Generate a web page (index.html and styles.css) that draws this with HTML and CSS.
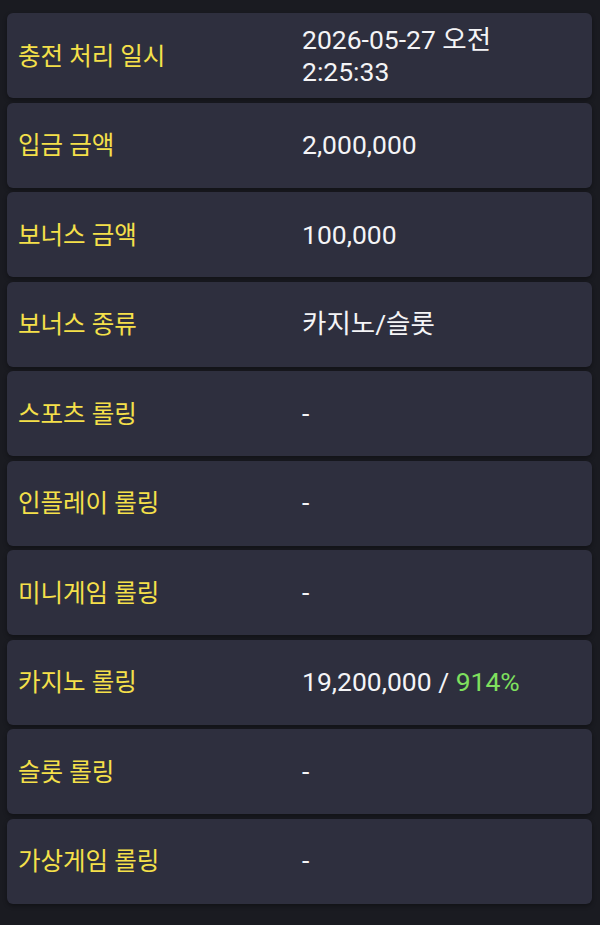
FILE: index.html
```html
<!DOCTYPE html>
<html lang="ko">
<head>
    <meta charset="UTF-8">
    <meta name="viewport" content="width=device-width, initial-scale=1.0">
    <title>충전 내역</title>
    <link rel="stylesheet" href="styles.css">
</head>
<body>
    <div class="detail-list">
        <div class="detail-row">
            <div class="label">충전 처리 일시</div>
            <div class="value">2026-05-27 오전<br>2:25:33</div>
        </div>
        <div class="detail-row">
            <div class="label">입금 금액</div>
            <div class="value">2,000,000</div>
        </div>
        <div class="detail-row">
            <div class="label">보너스 금액</div>
            <div class="value">100,000</div>
        </div>
        <div class="detail-row">
            <div class="label">보너스 종류</div>
            <div class="value">카지노/슬롯</div>
        </div>
        <div class="detail-row">
            <div class="label">스포츠 롤링</div>
            <div class="value">-</div>
        </div>
        <div class="detail-row">
            <div class="label">인플레이 롤링</div>
            <div class="value">-</div>
        </div>
        <div class="detail-row">
            <div class="label">미니게임 롤링</div>
            <div class="value">-</div>
        </div>
        <div class="detail-row">
            <div class="label">카지노 롤링</div>
            <div class="value">19,200,000 / <span class="percent">914%</span></div>
        </div>
        <div class="detail-row">
            <div class="label">슬롯 롤링</div>
            <div class="value">-</div>
        </div>
        <div class="detail-row">
            <div class="label">가상게임 롤링</div>
            <div class="value">-</div>
        </div>
    </div>
</body>
</html>
```

FILE: styles.css
```css
/* Global Styles */
body {
    font-family: Roboto, 'Noto Sans CJK KR', sans-serif;
    background-color: #1a1b21;
    margin: 0;
    padding: 0;
    color: #f4f4f6;
}

.detail-list {
    display: flex;
    flex-direction: column;
    gap: 4.5px;
    padding: 13px 8px 20px 7px;
}

.detail-row {
    display: grid;
    grid-template-columns: 284px 1fr;
    align-items: center;
    min-height: 85px;
    padding: 0 11px;
    background-color: #2e2f3e;
    border-radius: 6px;
    box-shadow: 0 2px 4px rgba(0, 0, 0, 0.35);
    box-sizing: border-box;
}

.label {
    color: #f5e04a;
    font-size: 24.5px;
    padding-bottom: 3px;
}

.value {
    font-size: 26.5px;
    line-height: 32px;
}

.percent {
    color: #7fe05e;
}
```
